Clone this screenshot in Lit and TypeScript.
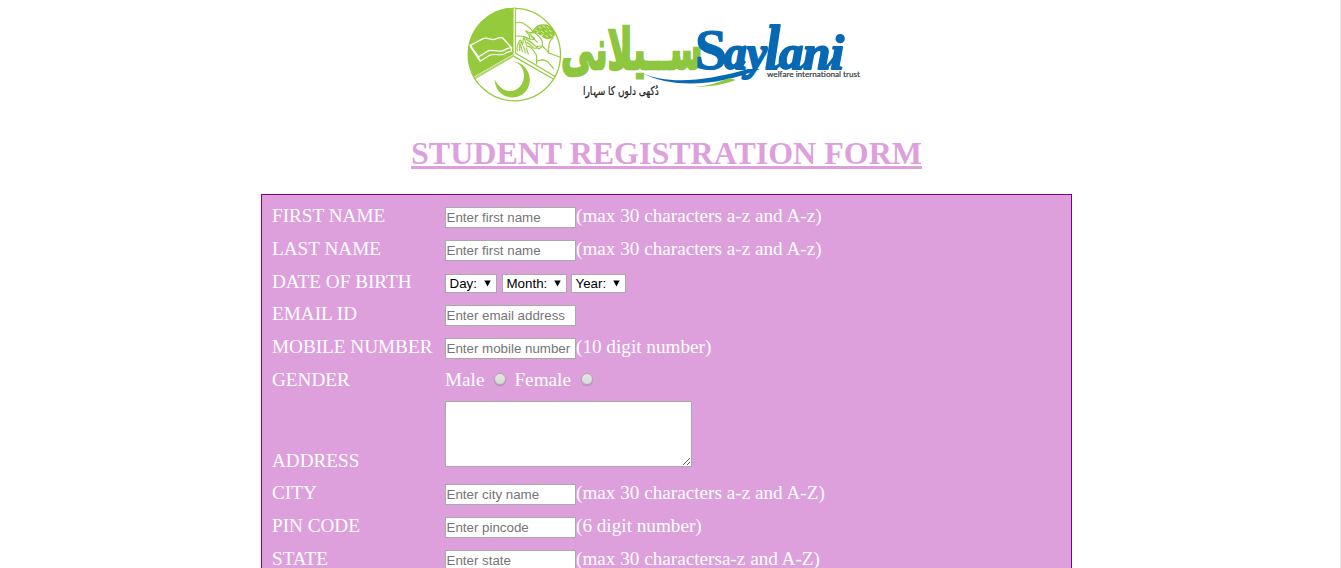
import { LitElement, html, css, svg } from "lit";
import { customElement, property } from "lit/decorators.js";

@customElement("saylani-logo")
class SaylaniLogo extends LitElement {
  static styles = css`
    :host { display: block; width: 410px; height: 110px; }
    svg { display: block; }
    .serif { font-family: "Liberation Serif", serif; font-weight: 700; }
    .script { font-family: "Liberation Serif", serif; font-weight: 700; font-style: italic; }
    .arabic { font-family: "DejaVu Sans", sans-serif; font-weight: 700; }
    .urdu { font-family: "DejaVu Sans", sans-serif; }
    .small { font-family: Lato, sans-serif; font-weight: 500; }
  `;

  private emblem() {
    return svg`
      <g transform="translate(0 .3) scale(.33333)" fill="none" stroke-linejoin="round" stroke-linecap="round">
        <path d="M161 161V22A139 139 0 0 0 42 229Z" fill="#96ca3d"/>
        <circle cx="163" cy="163" r="138.5" stroke="#96ca3d" stroke-width="3.8"/>
        <path d="M166 23V158L284 228M160 166L44 233M163 169L280 236" stroke="#96ca3d" stroke-width="3.6"/>
        <path d="M163 24V163L45 231" stroke="#fff" stroke-width="2"/>
        <path d="M163 163L43 232M160 169L47 235" stroke="#96ca3d" stroke-width="2"/>
        <path d="M155 183C194 188 200 231 183 255C162 285 119 274 104 236C105 274 132 294 164 291C204 285 220 243 202 211C192 193 174 184 155 183Z" fill="#96ca3d"/>
        <path d="M31 135L68 116C78 109 89 117 99 118C109 118 116 108 128 113L155 143C141 140 137 150 125 152C110 154 96 148 86 151L55 170Z" stroke="#fff" stroke-width="4"/>
        <path d="M31 135L34 144L60 183L89 165C106 157 126 171 139 157L154 152V143M55 170L60 181" stroke="#fff" stroke-width="3.4"/>
        <g stroke="#96ca3d" stroke-width="3.4">
          <path d="M166 68C177 64 187 66 196 73C206 82 221 89 218 97C213 101 204 94 197 92C204 100 214 111 207 116L187 108L166 107"/>
          <path d="M191 108C202 114 219 120 224 116C222 107 203 104 211 97C225 92 235 105 243 116C252 126 244 132 248 138C253 145 264 150 266 158L299 170"/>
          <path d="M172 151C168 140 175 129 179 120C185 117 184 131 188 134C191 123 187 113 192 112C196 119 198 132 202 139C209 134 221 151 228 162C232 173 229 183 230 191"/>
          <path d="M179 151C180 142 177 134 181 126M187 154L182 134M196 158L191 139M205 161L199 143M198 116L229 139L241 137M201 126L222 144L234 144M208 122L237 146L247 138M214 108L232 126M230 183L247 178L263 184L281 205M265 158C269 139 261 128 279 113"/>
        </g>
        <path d="M217 94C221 81 237 69 253 72C266 72 277 81 284 95C288 105 280 114 268 116C253 119 246 105 233 100Z" fill="#96ca3d"/>
        <path d="M225 88L231 91M237 80L243 84M249 77L255 81M261 80L266 84M231 97L238 94M244 93L250 97M256 91L262 95M268 90L274 94M244 105L250 103M257 106L263 109M270 103L276 106" stroke="#d9efb4" stroke-width="3"/>
      </g>`;
  }

  render() {
    return html`<svg width="410" height="110" viewBox="0 0 410 110">
      ${this.emblem()}
      <text class="arabic" transform="translate(101 68.5) scale(.645 1.08)" font-size="52" fill="#8dc63f" stroke="#8dc63f" stroke-width="2.4" direction="ltr">ســیلانی</text>
      <path d="M182 73C208 85 247 81 288 69L300 69C258 86 213 89 182 73Z" fill="#0768b3"/>
      <path d="M234 87C250 86 259 82 269 78L276 80C262 85 248 87 234 87Z" fill="#8dc63f"/>
      <g fill="#0768b3" stroke="#0768b3" stroke-linejoin="round">
        <text class="serif" x="235" y="69" font-size="57" textLength="32" lengthAdjust="spacingAndGlyphs" stroke-width="1.2">S</text>
        <g class="script" font-size="49" stroke-width="2">
          <text x="264" y="69" textLength="43" lengthAdjust="spacingAndGlyphs">ay</text>
          <text x="305" y="69" font-size="63" textLength="15" lengthAdjust="spacingAndGlyphs">l</text>
          <text x="319" y="69" textLength="65" lengthAdjust="spacingAndGlyphs">ani</text>
        </g>
        <path d="M275 68C281 68 281 66 285 61M311 68C318 68 319 65 323 61M338 68C344 68 346 62 351 55M364 68C369 67 371 61 375 57" fill="none" stroke-width="3"/>
      </g>
      <text class="small" x="307" y="76.5" font-size="8" textLength="93" lengthAdjust="spacingAndGlyphs" fill="#343d45" stroke="#343d45" stroke-width=".15">welfare international trust</text>
      <text class="urdu" transform="translate(123 94.5) scale(.82 1.1)" font-size="11" fill="#222" stroke="#222" stroke-width=".2">دُکھی دلوں کا سہارا</text>
    </svg>`;
  }
}

@customElement("form-row")
class FormRow extends LitElement {
  @property() label = "";
  static styles = css`
    :host { display: grid; grid-template-columns: 173px 1fr; height: 33px; }
    .label { padding-top: 5px; line-height: 22px; white-space: nowrap; }
    .field { display: flex; align-items: flex-start; }
    :host(.short) { height: 32px; }
    :host(.tall) { height: 80px; }
    :host(.tall) .label { padding-top: 53px; }
  `;
  render() {
    return html`<div class="label">${this.label}</div><div class="field"><slot></slot></div>`;
  }
}

@customElement("app-root")
class AppRoot extends LitElement {
  static styles = css`
    :host { display: block; height: 568px; overflow: hidden; background: #fff; border-right: 1px solid #ececec; box-sizing: border-box; font-family: "Liberation Serif", serif; }
    .page { width: 811px; margin-left: 261px; }
    .logo { margin-left: 199px; }
    h1 { margin: 25px 0 0; height: 59px; line-height: 37px; font-size: 32px; text-align: center; color: #dda0dd; text-decoration: underline; white-space: nowrap; }
    .form { box-sizing: border-box; height: 600px; padding: 5px 10px; background: #dda0dd; border: 1px solid purple; color: #fff; font-size: 19.2px; }
    input, textarea { box-sizing: border-box; margin: 7px 0 0; border: 1px solid #a9a9a9; background: #fff; border-radius: 0; outline: none; }
    input { width: 131px; height: 21px; padding: 1px 0 1px .5px; font: 13.33px "Liberation Sans", sans-serif; }
    input::placeholder { color: #757575; }
    textarea { width: 247px; height: 66px; margin-top: 4px; resize: both; }
    .hint { padding-top: 5px; line-height: 22px; white-space: nowrap; }
    .select { display: flex; box-sizing: border-box; justify-content: space-between; align-items: center; height: 19px; margin: 8px 5px 0 0; padding: 0 5px 0 3.5px; border: 1px solid #a9a9a9; background: #fff; color: #000; font: 13.33px "Liberation Sans", sans-serif; }
    .select svg { margin-bottom: 1px; }
    .day { width: 52px; }
    .month { width: 65px; margin-right: 4px; }
    .year { width: 55px; }
    .radio { width: 12px; height: 12px; margin: 9px 9px 0 10px; border-radius: 50%; box-sizing: border-box; border: 1px solid #aaa; background: linear-gradient(#e6e6e6, #d8d8d8); box-shadow: 0 1px 1px #b58ab5; }
    .radio + .hint { margin-left: -1px; }
  `;

  private text(label: string, placeholder: string, hint = "", cls = "") {
    return html`<form-row class=${cls} label=${label}><input placeholder=${placeholder}><span class="hint">${hint}</span></form-row>`;
  }

  private select(name: string, cls: string) {
    return html`<div class="select ${cls}"><span>${name}</span><svg width="7" height="7" viewBox="0 0 7 7"><path d="M.3 .5H6.7L3.5 6.5Z"/></svg></div>`;
  }

  render() {
    return html`<main class="page">
      <saylani-logo class="logo"></saylani-logo>
      <h1>STUDENT REGISTRATION FORM</h1>
      <section class="form">
        ${this.text("FIRST NAME", "Enter first name", "(max 30 characters a-z and A-z)")}
        ${this.text("LAST NAME", "Enter first name", "(max 30 characters a-z and A-z)")}
        <form-row class="short" label="DATE OF BIRTH">${this.select("Day:", "day")}${this.select("Month:", "month")}${this.select("Year:", "year")}</form-row>
        ${this.text("EMAIL ID", "Enter email address")}
        ${this.text("MOBILE NUMBER", "Enter mobile number", "(10 digit number)")}
        <form-row label="GENDER"><span class="hint">Male</span><span class="radio"></span><span class="hint">Female</span><span class="radio"></span></form-row>
        <form-row class="tall" label="ADDRESS"><textarea></textarea></form-row>
        ${this.text("CITY", "Enter city name", "(max 30 characters a-z and A-Z)")}
        ${this.text("PIN CODE", "Enter pincode", "(6 digit number)")}
        ${this.text("STATE", "Enter state", "(max 30 charactersa-z and A-Z)")}
      </section>
    </main>`;
  }
}
